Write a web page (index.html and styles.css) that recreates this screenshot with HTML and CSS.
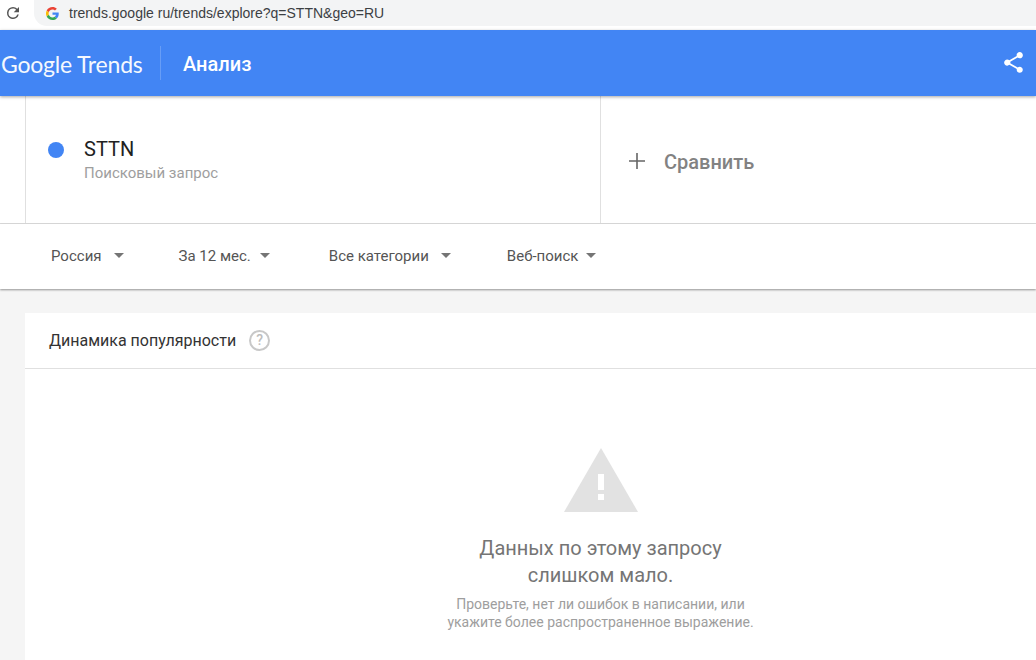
FILE: index.html
```html
<!DOCTYPE html>
<html lang="ru">
<head>
<meta charset="utf-8">
<title>Google Trends</title>
<link rel="stylesheet" href="styles.css">
</head>
<body>
<div class="browser">
  <svg class="reload" viewBox="0 0 24 24" width="18" height="18"><path fill="#555" d="M17.65 6.35A7.96 7.96 0 0 0 12 4a8 8 0 1 0 7.73 10h-2.08A6 6 0 1 1 12 6c1.66 0 3.14.69 4.22 1.78L13 11h7V4l-2.35 2.35z"/></svg>
  <div class="omnibox">
    <svg class="favicon" viewBox="0 0 48 48" width="13" height="13"><path fill="#EA4335" d="M24 9.5c3.5 0 6.700 1.300 9.100 3.400l6.800-6.800C35.800 2.400 30.200 0 24 0 14.600 0 6.500 5.400 2.600 13.200l7.900 6.100C12.400 13.600 17.700 9.500 24 9.500z"/><path fill="#4285F4" d="M47 24.500c0-1.600-.1-3.100-.4-4.500H24v9h12.900c-.6 3-2.200 5.500-4.700 7.200l7.600 5.900C44.300 37.900 47 31.800 47 24.500z"/><path fill="#FBBC05" d="M10.500 28.700A14.500 14.500 0 0 1 10.500 19.300L2.600 13.200a24 24 0 0 0 0 21.600l7.900-6.100z"/><path fill="#34A853" d="M24 48c6.200 0 11.500-2 15.800-5.900l-7.600-5.900c-2.100 1.400-4.900 2.300-8.200 2.300-6.300 0-11.600-4.100-13.500-9.800l-7.900 6.100C6.500 42.600 14.600 48 24 48z"/></svg>
    <span class="url">trends.google ru/trends/explore?q=STTN&amp;geo=RU</span>
  </div>
</div>
<header class="appbar">
  <div class="logo">Google Trends</div>
  <div class="divider"></div>
  <div class="page-title">Анализ</div>
  <svg class="share" viewBox="0 0 24 24" width="25" height="25"><path fill="#fff" d="M18 16.080c-.76 0-1.440.3-1.960.77L8.910 12.700c.05-.23.090-.46.090-.7s-.04-.47-.09-.7l7.050-4.110c.54.5 1.250.81 2.040.81 1.660 0 3-1.340 3-3s-1.340-3-3-3-3 1.340-3 3c0 .24.040.47.090.7L8.040 9.810C7.500 9.310 6.790 9 6 9c-1.660 0-3 1.340-3 3s1.340 3 3 3c.79 0 1.500-.31 2.040-.81l7.120 4.160c-.05.21-.08.43-.08.65 0 1.610 1.310 2.920 2.920 2.920s2.920-1.310 2.920-2.920-1.310-2.920-2.920-2.920z"/></svg>
</header>
<section class="terms">
  <div class="term">
    <span class="dot"></span>
    <div class="term-text">
      <div class="term-name">STTN</div>
      <div class="term-type">Поисковый запрос</div>
    </div>
  </div>
  <div class="compare">
    <svg class="plus" viewBox="0 0 16 16" width="16" height="16"><path fill="#666" d="M7.200 0h1.600v7.200H16v1.600H8.800V16H7.200V8.800H0V7.200h7.200z"/></svg>
    <span class="compare-label">Сравнить</span>
  </div>
</section>
<nav class="filters">
  <div class="filter filter-geo">Россия<span class="caret"></span></div>
  <div class="filter filter-time">За 12 мес.<span class="caret"></span></div>
  <div class="filter filter-cat">Все категории<span class="caret"></span></div>
  <div class="filter filter-type">Веб-поиск<span class="caret"></span></div>
</nav>
<main class="content">
  <article class="card">
    <div class="card-head">
      <h2 class="card-title">Динамика популярности</h2>
      <span class="help">?</span>
    </div>
    <div class="card-body">
      <svg class="warn" viewBox="0 0 74 64" width="74" height="64"><path fill="#e2e2e2" d="M37 0l37 64H0z"/><path fill="#fff" d="M34 26h6v16h-6zM34 46h6v6h-6z"/></svg>
      <p class="msg">Данных по этому запросу<br>слишком мало.</p>
      <p class="hint">Проверьте, нет ли ошибок в написании, или<br>укажите более распространенное выражение.</p>
    </div>
  </article>
</main>
</body>
</html>
```
FILE: styles.css
```css
html, body {
  margin: 0;
  padding: 0;
  height: 660px;
  overflow: hidden;
}
body {
  background: #f5f5f5;
  font-family: Roboto, "Liberation Sans", sans-serif;
  display: flex;
  flex-direction: column;
}
.browser {
  height: 30px;
  box-sizing: border-box;
  background: #fff;
  display: flex;
  align-items: flex-start;
  flex: none;
}
.reload {
  margin: 4px 0 0 4px;
  flex: none;
}
.omnibox {
  margin-left: 12px;
  width: 1002px;
  height: 26px;
  background: #f3f4f5;
  border-radius: 0 0 0 13px;
  display: flex;
  align-items: center;
  padding-left: 12px;
  box-sizing: border-box;
}
.favicon {
  flex: none;
}
.url {
  margin-left: 10px;
  font: 14px "Liberation Sans", Arial, sans-serif;
  color: #3c4043;
}
.appbar {
  height: 66px;
  flex: none;
  background: #4285f4;
  box-shadow: 0 1px 3px rgba(0,0,0,.35);
  display: flex;
  align-items: center;
  position: relative;
  z-index: 2;
  color: #fff;
}
.logo {
  width: 160px;
  padding: 1px 0 0 1px;
  box-sizing: border-box;
  font: 400 23px Lato, sans-serif;
  letter-spacing: -.2px;
  opacity: .95;
  flex: none;
}
.divider {
  width: 1px;
  height: 34px;
  background: rgba(255,255,255,.2);
  flex: none;
}
.page-title {
  margin-left: 22px;
  padding-top: 2px;
  font-size: 20px;
  font-weight: 500;
}
.share {
  margin-left: auto;
  margin-right: 10px;
  flex: none;
  transform: translateY(-1px);
}
.terms {
  height: 128px;
  flex: none;
  box-sizing: border-box;
  background: #fff;
  border-bottom: 1px solid #dcdcdc;
  display: flex;
  padding-left: 25px;
}
.term {
  width: 576px;
  box-sizing: border-box;
  border-left: 1px solid #e0e0e0;
  border-right: 1px solid #e0e0e0;
  display: flex;
  align-items: flex-start;
  padding: 41px 0 0 22px;
}
.dot {
  width: 16px;
  height: 16px;
  border-radius: 50%;
  background: #4285f4;
  margin-top: 5px;
  flex: none;
}
.term-text {
  margin-left: 20px;
}
.term-name {
  font-size: 20px;
  line-height: 25px;
  color: #212121;
}
.term-type {
  font-size: 15px;
  line-height: 22px;
  color: #9e9e9e;
}
.compare {
  display: flex;
  align-items: center;
  padding: 3px 0 0 28px;
  color: #757575;
}
.compare-label {
  margin-left: 19px;
  padding-top: 2px;
  font-size: 20px;
  font-weight: 500;
  opacity: .9;
}
.filters {
  height: 65px;
  flex: none;
  box-sizing: border-box;
  background: #fff;
  box-shadow: 0 1px 2px rgba(0,0,0,.4);
  display: flex;
  align-items: center;
  padding: 0 0 2px 51px;
  position: relative;
  z-index: 1;
}
.filter {
  display: flex;
  align-items: center;
  font-size: 15px;
  color: #555;
}
.filter-geo { margin-right: 55px; }
.filter-time { margin-right: 59px; }
.filter-cat { margin-right: 56px; }
.caret {
  width: 0;
  height: 0;
  border-left: 5.500px solid transparent;
  border-right: 5.500px solid transparent;
  border-top: 5.500px solid #757575;
  margin-left: 12px;
}
.filter-time .caret { margin-left: 9px; }
.filter-type .caret { margin-left: 8px; }
.content {
  flex: 1;
  padding: 24px 0 0 25px;
  min-height: 0;
}
.card {
  background: #fff;
  height: 100%;
}
.card-head {
  height: 56px;
  box-sizing: border-box;
  border-bottom: 1px solid #e0e0e0;
  display: flex;
  align-items: center;
  padding-left: 24px;
}
.card-title {
  margin: 0;
  font-size: 16px;
  font-weight: 400;
  color: #333;
}
.help {
  width: 17px;
  height: 17px;
  margin-left: 13px;
  border: 2px solid #c8c8c8;
  border-radius: 50%;
  color: #bdbdbd;
  font-size: 14px;
  font-weight: 500;
  text-align: center;
  line-height: 17px;
}
.card-body {
  display: flex;
  flex-direction: column;
  align-items: center;
  padding: 79px 0 0 0;
  margin-left: 140px;
  text-align: center;
}
.warn {
  display: block;
}
.msg {
  margin: 23px 0 0;
  font-size: 20px;
  line-height: 27px;
  color: #757575;
}
.hint {
  margin: 6px 0 0;
  font-size: 14px;
  line-height: 18px;
  color: #9e9e9e;
}
```
